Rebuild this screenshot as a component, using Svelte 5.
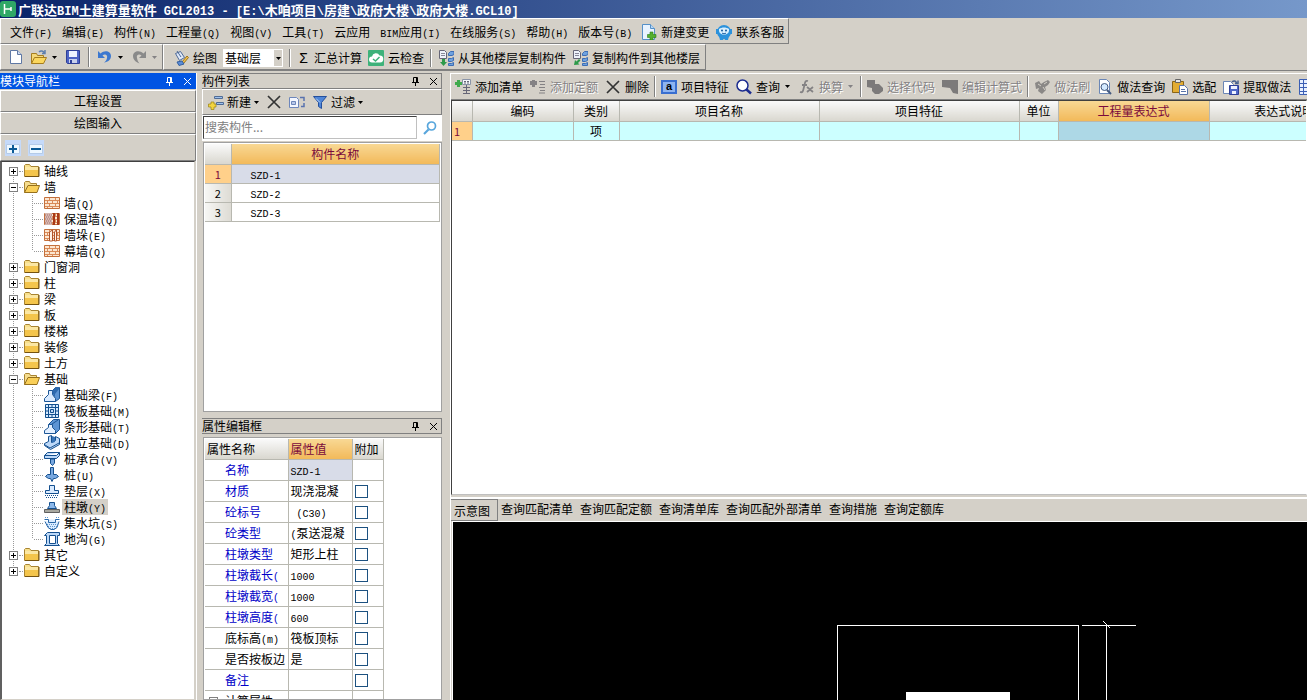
<script>
  const menus = ['文件(F)', '编辑(E)', '构件(N)', '工程量(Q)', '视图(V)', '工具(T)', '云应用', 'BIM应用(I)', '在线服务(S)', '帮助(H)', '版本号(B)'];

  const floors = ['基础层', '首层', '第2层'];
  let floor = $state('基础层');

  let tree = $state([
    { label: '轴线' },
    {
      label: '墙',
      open: true,
      children: [
        { label: '墙(Q)', icon: 'brick' },
        { label: '保温墙(Q)', icon: 'brickWarm' },
        { label: '墙垛(E)', icon: 'brickPier' },
        { label: '幕墙(Q)', icon: 'brick' }
      ]
    },
    { label: '门窗洞' },
    { label: '柱' },
    { label: '梁' },
    { label: '板' },
    { label: '楼梯' },
    { label: '装修' },
    { label: '土方' },
    {
      label: '基础',
      open: true,
      children: [
        { label: '基础梁(F)', icon: 'beam' },
        { label: '筏板基础(M)', icon: 'raft' },
        { label: '条形基础(T)', icon: 'strip' },
        { label: '独立基础(D)', icon: 'isolated' },
        { label: '桩承台(V)', icon: 'cap' },
        { label: '桩(U)', icon: 'pile' },
        { label: '垫层(X)', icon: 'cushion' },
        { label: '柱墩(Y)', icon: 'pier' },
        { label: '集水坑(S)', icon: 'sump' },
        { label: '地沟(G)', icon: 'trench' }
      ]
    },
    { label: '其它' },
    { label: '自定义' }
  ]);
  let selectedNode = $state('柱墩(Y)');

  const components = ['SZD-1', 'SZD-2', 'SZD-3'];
  let selectedComponent = $state(0);
  let search = $state('');

  let props = $state([
    { name: '名称', value: 'SZD-1', selected: true },
    { name: '材质', value: '现浇混凝', checked: false },
    { name: '砼标号', value: ' (C30)', checked: false },
    { name: '砼类型', value: '(泵送混凝', checked: false },
    { name: '柱墩类型', value: '矩形上柱', checked: false },
    { name: '柱墩截长(', value: '1000', checked: false },
    { name: '柱墩截宽(', value: '1000', checked: false },
    { name: '柱墩高度(', value: '600', checked: false },
    { name: '底标高(m)', value: '筏板顶标', checked: false, plain: true },
    { name: '是否按板边', value: '是', checked: false, plain: true },
    { name: '备注', value: '', checked: false }
  ]);

  const tools = [
    { icon: 'addList', label: '添加清单' },
    { icon: 'addQuota', label: '添加定额', disabled: true },
    { icon: 'cross', label: '删除' },
    null,
    { icon: 'letterA', label: '项目特征' },
    { icon: 'magnifier', label: '查询', menu: true },
    { icon: 'fx', label: '换算', menu: true, disabled: true },
    null,
    { icon: 'code', label: '选择代码', disabled: true },
    { icon: 'formula', label: '编辑计算式', disabled: true },
    null,
    { icon: 'brush', label: '做法刷', disabled: true },
    { icon: 'pageSearch', label: '做法查询' },
    { icon: 'clipboard', label: '选配' },
    { icon: 'extract', label: '提取做法' },
    { icon: 'grid', label: '' }
  ];

  const columns = ['编码', '类别', '项目名称', '项目特征', '单位', '工程量表达式', '表达式说明'];
  const tabs = ['示意图', '查询匹配清单', '查询匹配定额', '查询清单库', '查询匹配外部清单', '查询措施', '查询定额库'];
  let activeTab = $state('示意图');

  const bricks = '<path fill="#fbe6d0" stroke="#c4703c" d="M.5 2.5h15v11H.5z"/><path stroke="#d98a58" d="M1 5.5h14M1 8.5h14M1 11.5h14M5.5 3v2M11.5 3v2M3.5 6v2M8.5 6v2M13.5 6v2M5.5 9v2M11.5 9v2M3.5 12v1M8.5 12v1"/>';
  const floorCopy = '<path fill="#eef2fa" stroke="#667" d="M1.5.5h5l2 2v6h-7z"/><path stroke="#889" d="M3 3.5h4M3 5.5h4"/><path fill="#6ea2e0" stroke="#3c6cb4" d="M10.5 3.5l2-2H16v3l-2 1h-3.5zM10.5 8.5h3l2-1v3l-2 1h-3zM10.5 13.5h3l2-1v3h-5z"/>';
  const icons = {
    app: '<rect width="16" height="16" rx="3" fill="#2fa866"/><path stroke="#fff" stroke-width="1.5" d="M4.5 3v10M4.5 8h7M11 6v4"/>',
    newDoc: '<path fill="#fff" stroke="#5f78a4" d="M2.5 1.5h7l4 4v9h-11z"/><path fill="#cfdcf3" stroke="#5f78a4" d="M9.5 1.5v4h4"/>',
    openFolder: '<path fill="#f5d878" stroke="#a67d1e" d="M.5 14.5v-10h5l1 2h6v3"/><path fill="#fbd75e" stroke="#a67d1e" d="M.5 14.5l3-6h12l-3 6z"/><path stroke="#5e7fae" stroke-width="1.5" d="M8 3c2-2 4-1 5.5 1M14 1v3.5h-3"/>',
    save: '<path fill="#4d62c4" stroke="#2e3f97" d="M1.5 1.5h13v13h-12l-1-1z"/><path fill="#eef2ff" d="M4 2h8v6H4z"/><path fill="#c8d0ec" d="M4 10h8v4H4z"/><path fill="#2e3f97" d="M5 11h2v3H5z"/>',
    undo: '<path fill="#3c78d0" d="M1 2v7h7L5.5 6.500C8 4.500 11 6 10 9c-.4 2-1.500 3.500-3 4.500 4-.5 7-3 7-6.500 0-4.500-6-6.500-10.500-2.500z"/>',
    redo: '<path fill="#8a8a8a" d="M15 2v7H8l2.500-2.500C8 4.500 5 6 6 9c.4 2 1 4 2.500 5.500C4 13 2 10 2 7c0-4.500 6-6.500 10.500-2.500z"/>',
    paint: '<path fill="#dfe8f8" stroke="#4c6896" d="M2.500 3.500l5-2 4 6-5 3z"/><path stroke="#4c6896" d="M4 1l4 6"/><path fill="#f3c04a" stroke="#9b7420" d="M9 12l5-6 1.500 1.500-5 6z"/><path fill="#5c8dd8" stroke="#335f9f" d="M4 12l5-1 2 3-5 1.500z"/>',
    cloudCheck: '<rect width="16" height="16" rx="1" fill="#3db27a"/><path fill="#fff" d="M4 12.500a3 3 0 010-6 4 4 0 017.500-1 3.500 3.500 0 01.5 7z"/><path stroke="#3db27a" stroke-width="1.500" d="M5 9l2.500 2 4-4"/>',
    copyFrom: floorCopy + '<path fill="#2d9a4a" d="M4 9h3v3h2l-3.500 4L2 12h2z"/>',
    copyTo: floorCopy + '<path fill="#2d9a4a" d="M2 15l1-5 1.500 1.500L7 9l1.500 1.500L6 13l1.500 1.500z"/>',
    newChange: '<path fill="#e8f3ff" stroke="#5590c8" d="M1.500.5h8l4 4v11h-12z"/><path fill="#b9d7f5" stroke="#5590c8" d="M9.500.5v4h4"/><path fill="#54b030" stroke="#2c7c18" stroke-width=".6" d="M9 8h3v2.500h3v3h-3V16H9v-2.500H6.500v-3H9z"/>',
    service: '<circle cx="8" cy="8" r="7" fill="#2c92dc"/><path fill="#2c92dc" d="M0 5h3v5H0zM13 5h3v5h-3zM3 12l1 4h3l1-2 1 2h3l1-4z"/><path fill="#d8efff" d="M3 5c3-2 7-2 10 0v2c-1 5-9 5-10 0z"/><circle cx="6" cy="6.500" r="1" fill="#135a9e"/><circle cx="10" cy="6.500" r="1" fill="#135a9e"/><path stroke="#135a9e" d="M6 9c1 1 3 1 4 0"/>',
    plusBox: '<path fill="#c5dafa" d="M0 0h16v16H0z"/><path fill="#eef8ff" stroke="#b4cbe8" d="M1.500 4.500h13v9h-13z"/><path stroke="#0b5a96" stroke-width="2" d="M4 9h8M8 5v8"/>',
    minusBox: '<path fill="#c5dafa" d="M0 0h16v16H0z"/><path fill="#eef8ff" stroke="#b4cbe8" d="M1.500 4.500h13v9h-13z"/><path stroke="#0b5a96" stroke-width="2" d="M3 9h10"/>',
    folder: '<path fill="#f8e08c" stroke="#a88432" d="M.5 13.500v-11l1-1h4l1.500 2h7.500v10z"/><path fill="#f4c54c" d="M1 6h13v7.500H1z"/><path fill="#fbe7a4" d="M1 4h13v3H1z"/><path stroke="#755310" d="M1 13.500h14V4"/>',
    folderOpen: '<path fill="#f6dd8e" stroke="#a88432" d="M.5 13.500v-10l1-1h4l1 2h6v3"/><path fill="#f9cf58" stroke="#96701c" d="M.5 13.500l3.500-7h11.500l-2.500 7z"/>',
    brick: bricks,
    brickWarm: bricks + '<path fill="#d8b8b0" d="M1 2h7v12H1z"/><path stroke="#a07070" stroke-dasharray="1 1" d="M1 4h7M2 6h6M1 8h7M2 10h6M1 12h7"/><path stroke="#a83818" stroke-width="2" d="M10 2v12M14 2v12"/>',
    brickPier: bricks + '<path fill="#fff4e8" stroke="#b0562c" d="M5.500 14V5l3-2v11zM10.500 14V5l2-2v11z"/>',
    beam: '<path fill="#5c94d4" stroke="#1c5696" d="M7.500 4.500l4-4h4v11l-4 3h-3z"/><path fill="#d9eaff" stroke="#1c5696" d="M.5 14.500v-3l4-4v-4h4v4l3 4v3z"/><path fill="#2d69ae" d="M8 4l4-4h3v2l-4 5v3L9 7z"/>',
    raft: '<path fill="#d9ebff" stroke="#12508e" d="M1.500 1.500h13v13h-13z"/><path stroke="#12508e" d="M4.500 1v14M11.500 1v14M1 4.500h14M1 11.500h14M8 1v3M8 12v3M1 8h3M12 8h3"/><path fill="#bcd8f8" stroke="#12508e" d="M6.500 6.500h3v3h-3z"/>',
    strip: '<path fill="#5c94d4" stroke="#1c5696" d="M4.500 5.500l5-5h6v10l-4 4h-3z"/><path fill="#e2efff" stroke="#1c5696" d="M.5 14.500v-3l4-3v-3h4v3l3 3v3z"/><path stroke="#1c5696" d="M8 5l6-4"/>',
    isolated: '<path fill="#bcd8f8" stroke="#15508f" d="M.5 8.500l4-2v-5l3-1v7l4-2v-4l4 2v6l-9 5-6-4z"/><path fill="#3572b6" d="M8 1l3 1v5L8 8z"/><path stroke="#15508f" d="M1 10l5 3 9-5"/>',
    cap: '<path fill="#bcd8f8" stroke="#15508f" d="M.5 4.500l3-3h12v3l-3 3H.5zM.5 4.500h12l3-3"/><path fill="#78a8e0" stroke="#15508f" d="M6.500 8h4v4l-2 2.500-2-2z"/>',
    pile: '<path fill="#78a8e0" stroke="#15508f" d="M6.500.5h3v7h3l2 2-3 2h-2l-1.500 3-1.500-3h-2l-3-2 2-2h3z"/>',
    cushion: '<path fill="#d9ebff" stroke="#15508f" d="M5.500 2.500h5v5h4v3h-13v-3h4z"/><path stroke="#15508f" stroke-dasharray="1 1" d="M1 12.500h14M2 14.500h12"/>',
    pier: '<path fill="#8cb8ea" stroke="#15508f" d="M3.500 9.500l2-3v-3h5v3l2 3z"/><path fill="#a8a8a0" stroke="#606060" d="M.5 10.500h15v3H.5z"/>',
    sump: '<path fill="#d9ebff" stroke="#2a68a8" d="M.5 4.500h4v3h7v-3h4M1 6.500l3 6 3 2h3l3-2 2-6"/><path stroke="#5c94cc" stroke-dasharray="1 1" d="M3 9.500h11M4 11.500h9M6 13.500h6M1 2.500h3M12 2.500h3"/>',
    trench: '<path fill="#bcd8f8" stroke="#15508f" d="M.5 4.500l3-3h12v3h-2v8l2 2H.500l2-2v-8z"/><path fill="#fff" stroke="#15508f" d="M5.500 4.500h6v8h-6z"/>',
    newComponent: '<path fill="#f3d441" stroke="#9a8412" stroke-width=".7" d="M3 8h3v2h2v3H6v2.500H3V13H.500v-3H3z"/><path fill="#9fc2ee" stroke="#506c96" d="M6.500 2.500h8v2h-8zM8.500 8.500h7v2h-7z"/>',
    cross: '<path stroke="#333" stroke-width="1.700" d="M2 2l12 12M14 2L2 14"/>',
    copyDoc: '<path fill="#f3f6ff" stroke="#6d86bb" d="M.5 3.500h7l2 2v8h-9z"/><path fill="#b8c8ea" stroke="#6d86bb" d="M2.500 7.500h4v3h-4z"/><path stroke="#5872ae" stroke-width="1.500" d="M11 3.500h4v3.500M12 12.500h3V9"/>',
    funnel: '<path fill="#4f86d8" stroke="#244f9c" d="M1.500 2.500h13l-5 6v6l-3-2v-4z"/><path stroke="#bcd8ff" d="M4 4.500l4 4"/>',
    find: '<circle cx="9.500" cy="6" r="4" stroke="#58a6dc" stroke-width="1.700"/><path stroke="#58a6dc" stroke-width="2.200" d="M6.500 9.500L2 14"/>',
    addList: '<path fill="#3faa4c" d="M2 1h3v2h2v3H5v2H2V6H0V3h2z"/><path fill="#f4f6fa" stroke="#8a94a8" d="M7.500.5h8v5h-8z"/><path stroke="#667" stroke-dasharray="2 1" d="M9 2.500h6M9 4h6"/><path stroke="#667" d="M11.500 6v9M8 8.500h7M8 11.500h7M8 14.500h7"/>',
    addQuota: '<path fill="#848284" d="M2 1h3v1h2v4H5v2H2V6H0V2h2z"/><path stroke="#848284" d="M9 2.500h6M10 5.500h5M9 8.500h6M10 11.500h5M9 14h6"/>',
    magnifier: '<circle cx="6.500" cy="6.500" r="5.500" fill="#fff" stroke="#1c2c90" stroke-width="1.500"/><path stroke="#1c2c90" stroke-width="2.500" d="M10.500 10.500l4.500 4"/>',
    fx: '<path stroke="#848284" stroke-width="1.800" d="M9 2c-3-1-3 2-4 6s-1 6-4 5M3 6h5M8 8l6 5M14 8l-6 5"/>',
    code: '<path fill="#7c7a7a" d="M0 1h8v4h4l4 4v3l-4 3H8l-3-3V9L0 8z"/>',
    formula: '<path fill="#7c7a7a" d="M0 1h16v14l-5-1-3-5-8-1z"/>',
    brush: '<path fill="#8a8886" d="M1 4l4-2 2 3 3-2 4-2 2 2-2 3-3 2 1 3-4 4-4-3 1-3-3 1z"/><path stroke="#d4d0c8" d="M4 5l3 2M9 8l2 3M10 5l3-2"/>',
    pageSearch: '<path fill="#fff" stroke="#6b86b5" d="M2.500.5h7l3 3v11h-10z"/><circle cx="7.500" cy="8" r="3.500" fill="#d6ebff" stroke="#44597e"/><path stroke="#44597e" stroke-width="2" d="M10 11l4 4"/>',
    clipboard: '<path fill="#e3ad33" stroke="#8a6516" d="M.5 2.500h11v11H.5z"/><path fill="#e8e8e8" stroke="#666" d="M3.500.5h5v3h-5z"/><path fill="#fff" stroke="#5a74a8" d="M7.500 6.500h5l3 3v6h-8z"/><path stroke="#5a74a8" d="M9 10.500h4M9 12.500h5"/>',
    extract: '<path fill="#fff" stroke="#6b86b5" d="M.5 2.500h7l3 3v9H.5z"/><path fill="#5068c8" stroke="#2e3f97" d="M6.500 6.500h9v9h-9z"/><path fill="#eef2ff" d="M8 7h6v3H8zM9 12h4v3H9z"/><path stroke="#47618f" stroke-width="1.500" d="M9 3c2-2 4-1 4.500 1M15 1.500v3h-3"/>',
    grid: '<path fill="#e8f0ff" stroke="#3c5fb4" d="M1.500.5h14v15h-14zM2 4.500h14M2 8.500h14M2 12.500h14M5.500 1v15M10.500 1v15"/>'
  };

  // Latin runs are set in a half-width monospace beside the Chinese text
  const runs = (text) => text.split(/([\x20-\x7e]+)/).filter(Boolean);
</script>

{#snippet mixed(text)}{#each runs(text) as run}{#if /^[\x20-\x7e]/.test(run)}<span class="latin">{run}</span>{:else}{run}{/if}{/each}{/snippet}

{#snippet icon(name)}
  <svg class="icon" viewBox="0 0 16 16" fill="none" aria-hidden="true">{@html icons[name]}</svg>
{/snippet}

{#snippet arrow()}
  <svg class="arrow" viewBox="0 0 5 3" aria-hidden="true"><path d="M0 0h5L2.500 3z" fill="currentColor" /></svg>
{/snippet}

{#snippet tool(item)}
  <button class="tool" disabled={item.disabled} aria-label={item.label || item.aria || item.icon}>
    {#if item.icon === 'letterA'}
      <span class="letter">a</span>
    {:else}
      {@render icon(item.icon)}
    {/if}
    {#if item.label}<span>{item.label}</span>{/if}
    {#if item.menu}{@render arrow()}{/if}
  </button>
{/snippet}

{#snippet paneHeader(title)}
  <h2>{title}</h2>
  <button class="pane-button" aria-label="固定">
    <svg viewBox="0 0 9 9" fill="none" stroke="currentColor" aria-hidden="true"><path d="M2.500 5V.5h4V5M5.500 1v4M1 5.500h7M4.500 6v3" /></svg>
  </button>
  <button class="pane-button" aria-label="关闭">
    <svg viewBox="0 0 9 9" fill="none" stroke="currentColor" aria-hidden="true"><path d="M1 1l7 7M8 1L1 8" /></svg>
  </button>
{/snippet}

<div class="window">
  <header class="titlebar">
    {@render icon('app')}
    <h1>{@render mixed('广联达BIM土建算量软件 GCL2013 - [E:\\木咱项目\\房建\\政府大楼\\政府大楼.GCL10]')}</h1>
  </header>

  <nav class="bar menubar">
    {#each menus as menu}
      <button>{@render mixed(menu)}</button>
    {/each}
    {@render tool({ icon: 'newChange', label: '新建变更' })}
    {@render tool({ icon: 'service', label: '联系客服' })}
  </nav>

  <div class="toolbars">
    <div class="bar file-bar">
      {@render tool({ icon: 'newDoc', aria: '新建' })}
      {@render tool({ icon: 'openFolder', aria: '打开', menu: true })}
      {@render tool({ icon: 'save', aria: '保存' })}
      <span class="sep"></span>
      {@render tool({ icon: 'undo', aria: '撤销', menu: true })}
      {@render tool({ icon: 'redo', aria: '恢复', menu: true, disabled: true })}
    </div>
    <div class="bar draw-bar">
      {@render tool({ icon: 'paint', label: '绘图' })}
      <label class="combo">
        <select bind:value={floor} aria-label="楼层">
          {#each floors as item}
            <option>{item}</option>
          {/each}
        </select>
        <span class="combo-arrow">{@render arrow()}</span>
      </label>
      <span class="sep"></span>
      <button class="tool"><span class="sigma">Σ</span><span>汇总计算</span></button>
      {@render tool({ icon: 'cloudCheck', label: '云检查' })}
      <span class="sep"></span>
      {@render tool({ icon: 'copyFrom', label: '从其他楼层复制构件' })}
      {@render tool({ icon: 'copyTo', label: '复制构件到其他楼层' })}
    </div>
  </div>

  <div class="workspace">
    <aside class="navigator">
      <div class="pane-header active">{@render paneHeader('模块导航栏')}</div>
      <button class="section-button">工程设置</button>
      <button class="section-button">绘图输入</button>
      <div class="tree-tools">
        <button aria-label="展开">{@render icon('plusBox')}</button>
        <button aria-label="折叠">{@render icon('minusBox')}</button>
      </div>
      <div class="tree-box">
        <ul class="tree">
          {#each tree as node}
            <li>
              <div class="node">
                <button class="expander" aria-label={node.label} onclick={() => (node.open = !node.open)}>
                  <svg viewBox="0 0 9 9" aria-hidden="true"><path d={node.open ? 'M2 4.500h5' : 'M2 4.500h5M4.500 2v5'} stroke="#000" /></svg>
                </button>
                <span class="stub"></span>
                {@render icon(node.open ? 'folderOpen' : 'folder')}
                <span class="node-label">{node.label}</span>
              </div>
              {#if node.open && node.children}
                <ul class="branch">
                  {#each node.children as child}
                    <li class="node">
                      <span class="stub long"></span>
                      {@render icon(child.icon)}
                      <button
                        class="node-label"
                        class:selected={selectedNode === child.label}
                        onclick={() => (selectedNode = child.label)}>{@render mixed(child.label)}</button>
                    </li>
                  {/each}
                </ul>
              {/if}
            </li>
          {/each}
        </ul>
      </div>
    </aside>

    <div class="middle">
      <section class="list-pane">
        <div class="pane-header">{@render paneHeader('构件列表')}</div>
        <div class="bar list-bar">
          {@render tool({ icon: 'newComponent', label: '新建', menu: true })}
          {@render tool({ icon: 'cross', aria: '删除' })}
          {@render tool({ icon: 'copyDoc', aria: '复制' })}
          {@render tool({ icon: 'funnel', label: '过滤', menu: true })}
        </div>
        <div class="search">
          <input type="text" placeholder="搜索构件..." aria-label="搜索构件" bind:value={search} />
          <button aria-label="搜索">{@render icon('find')}</button>
        </div>
        <div class="sunken">
          <table class="components">
            <colgroup><col class="num" /><col /></colgroup>
            <thead>
              <tr><th></th><th class="hot">构件名称</th></tr>
            </thead>
            <tbody>
              {#each components as name, i}
                <tr class:current={selectedComponent === i} onclick={() => (selectedComponent = i)}>
                  <th scope="row">{i + 1}</th>
                  <td>{@render mixed(name)}</td>
                </tr>
              {/each}
            </tbody>
          </table>
        </div>
      </section>

      <section class="prop-pane">
        <div class="pane-header">{@render paneHeader('属性编辑框')}</div>
        <div class="sunken">
          <table class="props">
            <colgroup><col class="name" /><col class="value" /><col class="extra" /></colgroup>
            <thead>
              <tr><th>属性名称</th><th class="hot">属性值</th><th>附加</th></tr>
            </thead>
            <tbody>
              {#each props as prop}
                <tr>
                  <td class="prop-name" class:plain={prop.plain}>{@render mixed(prop.name)}</td>
                  <td class:chosen={prop.selected}>{@render mixed(prop.value)}</td>
                  <td class="check">
                    {#if prop.checked !== undefined}
                      <input type="checkbox" aria-label="附加 {prop.name}" bind:checked={prop.checked} />
                    {/if}
                  </td>
                </tr>
              {/each}
              <tr>
                <td>
                  <div class="group">
                    <button class="expander" aria-label="计算属性">
                      <svg viewBox="0 0 9 9" aria-hidden="true"><path d="M2 4.500h5M4.500 2v5" stroke="#000" /></svg>
                    </button>
                    <span>计算属性</span>
                  </div>
                </td>
                <td></td>
                <td></td>
              </tr>
            </tbody>
          </table>
        </div>
      </section>
    </div>

    <main>
      <div class="main-bar">
        {#each tools as item}
          {#if item}
            {@render tool(item)}
          {:else}
            <span class="sep"></span>
          {/if}
        {/each}
      </div>
      <div class="sheet">
        <table class="items">
          <colgroup>
            <col class="w-num" /><col class="w-code" /><col class="w-kind" /><col class="w-text" />
            <col class="w-text" /><col class="w-unit" /><col class="w-expr" /><col />
          </colgroup>
          <thead>
            <tr>
              <th></th>
              {#each columns as column}
                <th class:hot={column === '工程量表达式'}>{column}</th>
              {/each}
            </tr>
          </thead>
          <tbody>
            <tr>
              <th scope="row">1</th>
              {#each columns as column}
                <td class:focus={column === '工程量表达式'}>{column === '类别' ? '项' : ''}</td>
              {/each}
            </tr>
          </tbody>
        </table>
      </div>
      <div class="tabs" role="tablist">
        {#each tabs as tab}
          <button role="tab" aria-selected={activeTab === tab} class:active={activeTab === tab} onclick={() => (activeTab = tab)}>{tab}</button>
        {/each}
      </div>
      <div class="drawing">
        <svg width="854" height="400" fill="none" stroke="#fff" shape-rendering="crispEdges" aria-label="示意图">
          <path d="M384.500 400V103.500h241V400" />
          <path d="M629 103.500h54M653.500 103v297M650 99l7 7" />
          <path d="M453 170h104v230H453z" fill="#fff" stroke="none" />
        </svg>
      </div>
    </main>
  </div>
</div>

<style>
  :global(body) {
    margin: 0;
    background: #d4d0c8;
  }

  .window {
    --face: #d4d0c8;
    --shade: #808080;
    --line: #b8b8b0;
    display: flex;
    flex-direction: column;
    height: 100vh;
    overflow: hidden;
    background: var(--face);
    color: #000;
    font-family: 'Noto Sans CJK SC', sans-serif;
    font-size: 12px;
    line-height: 16px;
  }

  button {
    padding: 0;
    border: 0;
    background: none;
    color: inherit;
    font: inherit;
    white-space: nowrap;
  }

  h1,
  h2,
  ul {
    margin: 0;
    padding: 0;
    font-size: inherit;
    font-weight: normal;
    list-style: none;
  }

  .latin {
    font-family: 'Liberation Mono', monospace;
    font-size: 10px;
    line-height: 1;
    white-space: pre;
  }

  .icon {
    display: block;
    flex: none;
    width: 16px;
    height: 16px;
  }

  .arrow {
    flex: none;
    width: 5px;
    height: 3px;
  }

  /* title and menus */
  .titlebar {
    display: flex;
    gap: 2px;
    flex: none;
    height: 18px;
    background: linear-gradient(90deg, #0a246a, #7698ca);
    color: #fff;
  }

  .titlebar .icon {
    margin-top: 1px;
  }

  .titlebar h1 {
    font-size: 13px;
    font-weight: bold;
    line-height: 20px;
    white-space: nowrap;
  }

  .titlebar .latin {
    font-size: 12px;
  }

  .bar {
    display: flex;
    align-items: center;
    box-sizing: border-box;
    height: 26px;
    border: 1px solid;
    border-color: #fff var(--shade) var(--shade) #fff;
  }

  .menubar {
    align-self: flex-start;
    gap: 10px;
    flex: none;
    padding: 2px 4px 0 9px;
  }

  .menubar .tool {
    margin-left: -1px;
  }

  .menubar .tool + .tool {
    margin-left: -3px;
  }

  .toolbars {
    display: flex;
    flex: none;
  }

  .tool {
    display: flex;
    align-items: center;
    gap: 4px;
  }

  .tool:disabled {
    color: #848284;
    text-shadow: 1px 1px #fff;
  }

  .file-bar {
    gap: 7px;
    width: 163px;
    padding-left: 7px;
  }

  .file-bar .arrow {
    margin: 0 1px;
  }

  .draw-bar {
    gap: 6px;
    padding: 2px 5px 0 9px;
  }

  .sep {
    flex: none;
    align-self: stretch;
    width: 1px;
    margin: 2px 0;
    border-right: 1px solid #fff;
    background: var(--shade);
  }

  .sigma {
    width: 13px;
    font-family: 'Liberation Sans', sans-serif;
    font-size: 14px;
    text-align: center;
  }

  .combo {
    display: grid;
    width: 60px;
    height: 18px;
    background: #fff;
  }

  .combo select,
  .combo-arrow {
    grid-area: 1 / 1;
  }

  .combo select {
    width: 100%;
    padding: 0 2px;
    border: 0;
    appearance: none;
    background: none;
    color: inherit;
    font: inherit;
  }

  .combo-arrow {
    display: flex;
    align-items: center;
    justify-content: center;
    justify-self: end;
    width: 10px;
    background: var(--face);
    border: 1px solid #fff;
    box-sizing: border-box;
    pointer-events: none;
  }

  /* docked panes */
  .workspace {
    display: grid;
    grid-template-columns: 197px 240px minmax(0, 1fr);
    gap: 5px;
    flex: 1;
    min-height: 0;
    padding-top: 2px;
    border-top: 1px solid var(--shade);
  }

  .navigator {
    display: flex;
    flex-direction: column;
    min-height: 0;
    box-sizing: border-box;
    border-right: 1px solid #fff;
  }

  .pane-header {
    display: flex;
    align-items: center;
    gap: 9px;
    flex: none;
    box-sizing: border-box;
    height: 16px;
    padding-right: 3px;
    border: 1px solid var(--shade);
    border-left-width: 0;
    line-height: 14px;
  }

  .pane-header h2 {
    flex: 1;
  }

  .pane-header.active {
    margin-bottom: 1px;
    border-color: #0054e3;
    background: #0054e3;
    color: #fff;
  }

  .pane-button svg {
    display: block;
    width: 9px;
    height: 9px;
  }

  .section-button {
    flex: none;
    height: 22px;
    border: 1px solid;
    border-color: #fff var(--shade) var(--shade) #fff;
  }

  .tree-tools {
    display: flex;
    align-items: center;
    gap: 7px;
    flex: none;
    height: 25px;
    padding-left: 4px;
    border: 1px solid;
    border-color: #fff var(--shade) var(--shade) #fff;
  }

  .tree-box {
    flex: 1;
    min-height: 0;
    overflow: hidden;
    margin-right: 1px;
    padding-top: 1px;
    border: 1px solid var(--face);
    border-top-color: #404040;
    border-left: 2px solid #606060;
    background: #fff;
  }

  .tree,
  .branch {
    background: repeating-linear-gradient(#999 0 1px, transparent 1px 2px) no-repeat;
  }

  .tree {
    background-position: 11px 8px;
    background-size: 1px calc(100% - 16px);
  }

  .branch {
    background-position: 30px 0;
    background-size: 1px calc(100% - 8px);
  }

  .node {
    display: flex;
    align-items: center;
    height: 16px;
    padding-left: 7px;
  }

  .branch .node {
    padding-left: 31px;
  }

  .expander {
    flex: none;
    box-sizing: border-box;
    width: 9px;
    height: 9px;
    border: 1px solid var(--shade);
    background: #fff;
  }

  .expander svg {
    display: block;
    width: 9px;
    height: 9px;
    margin: -1px;
  }

  .stub {
    width: 4px;
    margin: 0 1px;
    border-top: 1px dotted #999;
  }

  .stub.long {
    width: 9px;
  }

  .node-label {
    padding: 0 2px;
    margin-left: 2px;
    line-height: 16px;
  }

  .node-label.selected {
    background: var(--face);
  }

  .middle {
    display: flex;
    flex-direction: column;
    gap: 6px;
    min-height: 0;
  }

  .list-pane {
    display: flex;
    flex-direction: column;
    flex: 0 0 339px;
  }

  .prop-pane {
    display: flex;
    flex-direction: column;
    gap: 2px;
    flex: 1;
    min-height: 0;
  }

  .list-bar {
    gap: 7px;
    flex: none;
    padding-left: 5px;
  }

  .list-bar .tool {
    gap: 3px;
  }

  .search {
    display: flex;
    flex: none;
    box-sizing: border-box;
    height: 26px;
    padding: 1px 2px 2px 1px;
    background: #fff;
  }

  .search input {
    flex: 1;
    min-width: 0;
    padding: 0 1px 2px;
    border: 1px solid;
    border-color: #404040 #c0c0c0 #c0c0c0 #404040;
    font: inherit;
  }

  .search input::placeholder {
    color: #808080;
  }

  .search button {
    padding: 0 2px 0 5px;
  }

  .sunken {
    flex: 1;
    min-height: 0;
    overflow: hidden;
    border: 1px solid;
    border-color: #404040 #fff #fff #404040;
    outline: 1px solid #a0a0a0;
    outline-offset: -1px;
    margin: 1px 0 0 1px;
    padding: 1px;
    background: #fff;
  }

  table {
    border-collapse: collapse;
    table-layout: fixed;
  }

  th,
  td {
    height: 18px;
    padding: 0;
    overflow: hidden;
    border: 0 solid var(--line);
    border-width: 0 1px 1px 0;
    font-weight: normal;
    line-height: 16px;
    white-space: nowrap;
  }

  thead th {
    height: 20px;
    background: linear-gradient(#fafafa, #d9d7cf);
  }

  thead th.hot {
    background: linear-gradient(#f8d894, #f2b95a);
    color: #7a0a3c;
  }

  tbody th {
    background: linear-gradient(90deg, #f6f6f4, #dddbd4);
    font-size: 11px;
  }

  .components {
    width: 100%;
  }

  .num {
    width: 26px;
  }

  .components td {
    padding-left: 19px;
  }

  .components .current td,
  .props .chosen {
    background: #d8dce8;
  }

  .components .current th,
  .items tbody th {
    background: #ffd08a;
    color: #7a0a3c;
  }

  .props {
    width: 178px;
  }

  .props th,
  .props td {
    height: 20px;
    padding: 0 0 0 2px;
    text-align: left;
  }

  .name {
    width: 83px;
  }

  .value {
    width: 64px;
  }

  .extra {
    width: 31px;
  }

  .props .prop-name {
    padding-left: 20px;
    color: #0000c8;
  }

  .props .prop-name.plain {
    color: #000;
  }

  .group {
    display: flex;
    align-items: center;
    gap: 7px;
    padding-left: 2px;
  }

  .check input {
    display: block;
    box-sizing: border-box;
    width: 13px;
    height: 13px;
    margin: 0;
    appearance: none;
    border: 1px solid #1c5180;
    background: #fff;
  }

  .check input:checked {
    background: #1c5180;
  }

  /* bill of quantities */
  main {
    display: flex;
    flex-direction: column;
    min-height: 0;
    margin-left: 3px;
    border-left: 1px solid #fff;
  }

  .main-bar {
    display: flex;
    align-items: center;
    gap: 7px;
    flex: none;
    height: 25px;
    padding-left: 4px;
    overflow: hidden;
    border-top: 1px solid #fff;
    border-bottom: 1px solid var(--shade);
  }

  .main-bar .sep {
    margin: 2px -2px;
  }

  .main-bar .arrow {
    margin: 0 2px 0 1px;
  }

  .letter {
    box-sizing: border-box;
    width: 16px;
    height: 14px;
    border: 2px solid #3a6fd0;
    background: #8eb4f0;
    font: bold 11px/9px 'Liberation Sans', sans-serif;
  }

  .sheet {
    flex: 0 0 393px;
    overflow: hidden;
    border: 1px solid;
    border-color: #404040 #fff #c0c0c0 #404040;
    background: #fff;
  }

  .items {
    width: 908px;
    min-width: 100%;
  }

  .items th,
  .items td {
    text-align: center;
  }

  .items td {
    background: #ccffff;
  }

  .items td.focus {
    background: #add8e6;
  }

  .items tbody th {
    padding-left: 2px;
    text-align: left;
  }

  .w-num {
    width: 20px;
  }

  .w-code {
    width: 101px;
  }

  .w-kind {
    width: 46px;
  }

  .w-text {
    width: 200px;
  }

  .w-unit {
    width: 39px;
  }

  .w-expr {
    width: 151px;
  }

  .tabs {
    display: flex;
    gap: 7px;
    flex: none;
    height: 22px;
    margin-top: 2px;
    border-top: 2px solid #fff;
    overflow: hidden;
  }

  .tabs button {
    height: 20px;
  }

  .tabs .active {
    height: 22px;
    margin-right: -4px;
    padding: 2px 7px 0 3px;
    border: 1px solid var(--shade);
    border-left: 0;
  }

  .drawing {
    flex: 1;
    min-height: 0;
    overflow: hidden;
    margin-left: 1px;
    border: 1px solid #fff;
    border-width: 1px 0 0 1px;
    background: #000;
  }

  .drawing svg {
    display: block;
  }
</style>
